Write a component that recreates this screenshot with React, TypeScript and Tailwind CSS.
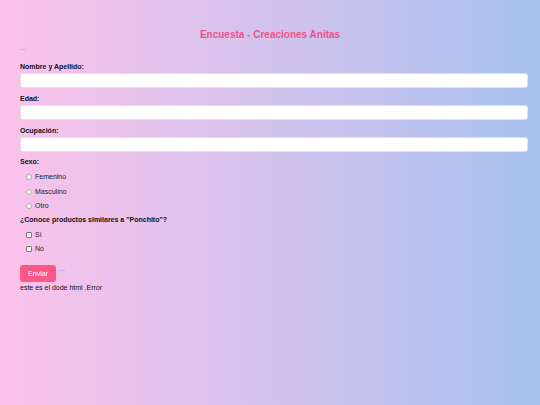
import React from 'react';

const Label = ({ children }: { children: React.ReactNode }) => (
  <label className="block text-[7px] leading-[10px] font-bold text-[#111]">{children}</label>
);

const Field = ({ label, mt }: { label: string; mt: string }) => (
  <div className={mt}>
    <Label>{label}</Label>
    <input
      type="text"
      className="mt-[1px] block w-full h-[15px] rounded-[3px] bg-white border border-[#e4e0ea] outline-none"
    />
  </div>
);

const App = () => {
  return (
    <div
      className="min-h-screen w-full bg-gradient-to-r from-[#fbc2eb] to-[#a6c1ee] pl-[20px] pr-[12px] pt-[29px] text-[#111]"
      style={{ fontFamily: '"Liberation Sans", Arial, sans-serif' }}
    >
      <h1 className="text-center text-[10px] leading-[12px] font-bold text-[#ec5289] pr-[8px]">
        Encuesta - Creaciones Anitas
      </h1>
      <p className="text-[7px] leading-[8px] text-[#888] mt-[3px]">...</p>

      <form className="block">
        <Field label="Nombre y Apellido:" mt="mt-[10px]" />
        <Field label="Edad:" mt="mt-[6px]" />
        <Field label="Ocupación:" mt="mt-[6px]" />

        <div className="mt-[5px]">
          <Label>Sexo:</Label>
          <div className="mt-[3px] flex flex-col">
            {['Femenino', 'Masculino', 'Otro'].map((s) => (
              <label key={s} className="flex items-center h-[14.5px] pl-[6px] text-[7px] text-[#222]">
                <span className="w-[6px] h-[6px] rounded-full border border-[#aaa] bg-white mr-[3px]" />
                {s}
              </label>
            ))}
          </div>
        </div>

        <div className="mt-[1px]">
          <Label>¿Conoce productos similares a "Ponchito"?</Label>
          <div className="mt-[3px] flex flex-col">
            {['Sí', 'No'].map((s) => (
              <label key={s} className="flex items-center h-[14.5px] pl-[6px] text-[7px] text-[#222]">
                <span className="w-[6px] h-[6px] rounded-[1px] border border-[#777] bg-white mr-[3px]" />
                {s}
              </label>
            ))}
          </div>
        </div>

        <div className="mt-[8px] flex items-start">
          <button
            type="button"
            className="w-[36px] h-[17px] rounded-[3px] bg-[#fb5787] text-white text-[7px] leading-[17px]"
          >
            Enviar
          </button>
          <span className="ml-[3px] text-[7px] leading-[8px] text-[#888]">...</span>
        </div>
      </form>
      <p className="text-[7px] leading-[9px] text-[#111] mt-[1px]">este es el dode html .Error</p>
    </div>
  );
};

export default App;
